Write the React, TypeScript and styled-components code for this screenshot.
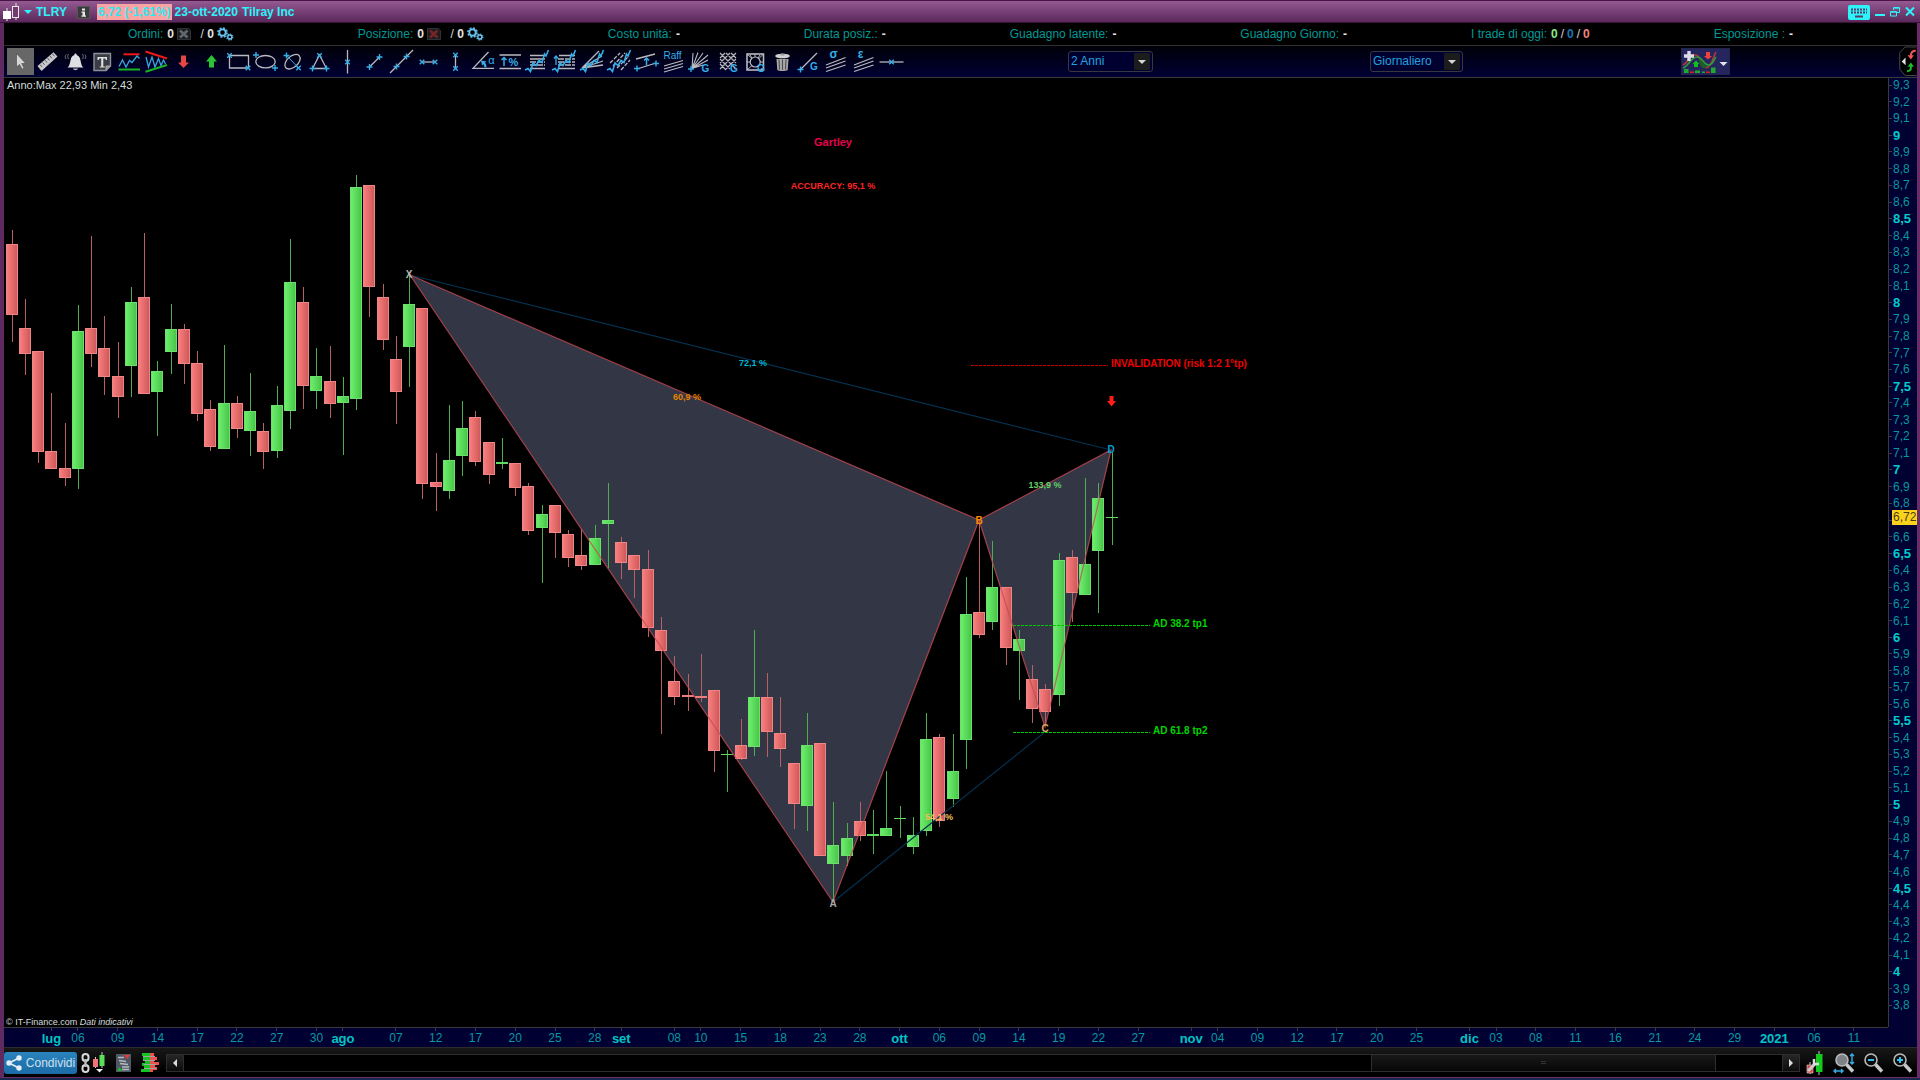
import React from "react";
import styled, { createGlobalStyle } from "styled-components";

const GlobalStyle = createGlobalStyle`
  *, *::before, *::after { box-sizing: border-box; }
  body { margin: 0; background: #000; font-family: "Liberation Sans", Arial, sans-serif; font-size: 12px; }
  button, select { font: inherit; color: inherit; }
`;

/* ---------- window frame ---------- */

const Frame = styled.div`
  display: flex;
  flex-direction: column;
  min-height: 100vh;
  background: #000;
  border-bottom: 2px solid #16284e;
`;

const Body = styled.div`
  flex: 1;
  display: flex;
  flex-direction: column;
  border-style: solid;
  border-color: #6b2b68;
  border-width: 0 3px 1px 4px;
  border-left-color: #5f2a60;
`;

const TitleBar = styled.header`
  display: flex;
  align-items: center;
  height: 23px;
  padding: 1px 5px 0 3px;
  border-top: 1px solid #4a1446;
  border-bottom: 1px solid #3c1338;
  background: linear-gradient(#945a92, #5a285a);
  color: #2df3fb;
  font-weight: bold;
`;

const Symbol = styled.h1`
  margin: 0 10px 0 1px;
  font-size: 12px;
`;

const Quote = styled.span`
  margin: 0 3px 0 7px;
  padding: 0 1px;
  line-height: 16px;
  background: #fca3a3;
  color: #30e6f0;
`;

const Company = styled.span`
  flex: 1;
  display: flex;
  gap: 4px;
`;

const WindowButtons = styled.div`
  display: flex;
  align-items: center;
  gap: 5px;
`;

const BareButton = styled.button`
  display: flex;
  align-items: center;
  justify-content: center;
  flex: none;
  padding: 0;
  border: 0;
  background: none;
  cursor: pointer;
`;

/* ---------- account summary ---------- */

const Summary = styled.dl`
  display: flex;
  justify-content: space-evenly;
  align-items: center;
  height: 23px;
  margin: 0;
  padding-bottom: 1px;
  border-bottom: 1px solid #303030;
  background: #000;
`;

const SummaryItem = styled.div`
  display: flex;
  align-items: center;
  gap: 4px;
  dt { color: #009a96; }
  dd { display: flex; align-items: center; gap: 3px; margin: 0; color: #d8d8d8; }
`;

const Count = styled.b<{ $color?: string }>`
  color: ${(p) => p.$color ?? "#e4e4e4"};
`;

/* ---------- toolbar ---------- */

const ToolBar = styled.div`
  display: grid;
  grid-template-columns: 898px 411fr 201fr 377fr 23px;
  align-items: center;
  justify-items: center;
  height: 32px;
  padding: 0 0 2px 3px;
  border-bottom: 1px solid #3a3a3a;
  background: linear-gradient(#000008, #000034);
  color: #21a2de;
`;

const Tools = styled.div`
  display: grid;
  grid-template-columns: repeat(33, 1fr);
  width: 100%;
`;

const ToolButton = styled(BareButton)<{ $active?: boolean }>`
  height: 27px;
  background: ${(p) => (p.$active ? "#676767" : "none")};
  svg { overflow: visible; }
`;

const SelectBox = styled.div<{ $width: number }>`
  position: relative;
  width: ${(p) => p.$width}px;
  height: 21px;
  svg { position: absolute; right: 3px; top: 2px; pointer-events: none; }
`;

const Select = styled.select`
  appearance: none;
  width: 100%;
  height: 100%;
  padding: 0 20px 0 2px;
  border: 1px solid #383840;
  border-radius: 3px;
  background: #000030;
`;

const IndicatorGroup = styled.div`
  display: flex;
  gap: 1px;
  border: 1px solid #23234a;
  background: #26265e;
`;

const PanelTab = styled(BareButton)`
  justify-self: end;
`;

/* ---------- chart ---------- */

const ChartGrid = styled.main`
  flex: 1;
  display: grid;
  grid-template-columns: minmax(0, 1fr) 29px;
  grid-template-rows: 1fr 20px;
  background: #000033;
`;

const Plot = styled.section`
  position: relative;
  background: #000;
  > svg { display: block; width: 100%; height: auto; }
`;

const Range = styled.p`
  position: absolute;
  left: 3px;
  top: 0;
  margin: 0;
  font-size: 11px;
  line-height: 14px;
  color: #d3dddd;
`;

const Credit = styled.p`
  position: absolute;
  left: 2px;
  bottom: 0;
  margin: 0;
  font-size: 9px;
  line-height: 10px;
  color: #d5dede;
`;

const PriceAxis = styled.ol`
  position: relative;
  display: flex;
  flex-direction: column;
  justify-content: space-between;
  margin: 0;
  padding: 0 0 14px;
  list-style: none;
  border-left: 1px solid #3a3a3a;
`;

const PriceLabel = styled.li<{ $strong: boolean }>`
  display: flex;
  align-items: center;
  gap: 1px;
  height: 14px;
  white-space: nowrap;
  color: ${(p) => (p.$strong ? "#00cccc" : "#06999e")};
  font-size: ${(p) => (p.$strong ? 13 : 12)}px;
  font-weight: ${(p) => (p.$strong ? "bold" : "normal")};
  &::before { content: ""; width: 3px; height: 1px; background: #3c3c3c; }
`;

const LastPrice = styled.li`
  position: absolute;
  left: 3px;
  width: 25px;
  line-height: 15px;
  padding-left: 1px;
  background: #fbd21c;
  color: #4a3d10;
`;

const TimeAxis = styled.ol`
  display: grid;
  grid-template-columns: repeat(142, minmax(0, 1fr));
  margin: 0;
  padding: 0 1px;
  list-style: none;
  border-top: 1px solid #3a3a3a;
`;

const TimeLabel = styled.li<{ $bar: number; $strong: boolean }>`
  grid-row: 1;
  grid-column: ${(p) => p.$bar + 1};
  display: flex;
  flex-direction: column;
  align-items: center;
  white-space: nowrap;
  line-height: 15px;
  color: ${(p) => (p.$strong ? "#00c4c4" : "#06999e")};
  font-size: ${(p) => (p.$strong ? 13 : 12)}px;
  font-weight: ${(p) => (p.$strong ? "bold" : "normal")};
  &::before { content: ""; width: 1px; height: 3px; background: #3c3c3c; }
`;

/* ---------- bottom bar ---------- */

const BottomBar = styled.footer`
  display: flex;
  align-items: center;
  height: 30px;
  padding-right: 4px;
  border-top: 1px solid #2c2c2c;
  background: linear-gradient(#181818, #000 80%);
`;

const ShareButton = styled(BareButton)`
  gap: 4px;
  width: 73px;
  height: 22px;
  border-radius: 3px;
  background: linear-gradient(#2a83bd, #1b6ba6);
  color: #cfe0ee;
`;

const LeftIcons = styled.div`
  display: flex;
  align-items: center;
  gap: 10px;
  padding: 0 7px 0 4px;
`;

const Scroll = styled.div`
  flex: 1;
  display: flex;
  height: 18px;
`;

const ScrollButton = styled(BareButton)`
  width: 18px;
  border: 1px solid #2e2e2e;
  background: linear-gradient(#262626, #0c0c0c);
`;

const Track = styled.div`
  flex: 1;
  display: grid;
  grid-template-columns: 1188fr 346fr 66fr;
  border: solid #2e2e2e;
  border-width: 1px 0;
  background: #000;
`;

const Thumb = styled.div`
  grid-column: 2;
  display: flex;
  align-items: center;
  justify-content: center;
  border: solid #2e2e2e;
  border-width: 0 1px;
  background: linear-gradient(#181818, #070707);
  &::before { content: ""; width: 5px; height: 3px; border: solid #333; border-width: 1px 0; }
`;

const ZoomIcons = styled.div`
  display: flex;
  gap: 7px;
  margin-left: 4px;
`;

/* ---------- toolbar drawings ---------- */

const W = "#b9b9bd";
const B = "#35aee6";

const Cross = ({ x, y, plus }: { x: number; y: number; plus?: boolean }) => (
  <path
    d={plus ? `M${x - 3} ${y}h6M${x} ${y - 3}v6` : `M${x - 2.3} ${y - 2.3}l4.6 4.6M${x - 2.3} ${y + 2.3}l4.6 -4.6`}
    stroke={B}
    strokeWidth="1.4"
  />
);

const L = ({ d, c = W, w = 1.3, dash }: { d: string; c?: string; w?: number; dash?: string }) => (
  <path d={d} stroke={c} strokeWidth={w} strokeDasharray={dash} />
);

const T = ({ x, y, s, children, bold = true }: { x: number; y: number; s: number; children: string; bold?: boolean }) => (
  <text x={x} y={y} fontSize={s} fontWeight={bold ? "bold" : "normal"} fill={B} textAnchor="middle">{children}</text>
);

const zigzag = "M1 22L4 20.5L6.5 23.5L9 15L12 17.5L15 12.5L18 14.5L20.5 6L22 8L24.5 2";

const tools: [string, React.ReactNode][] = [
  ["Puntatore", <path d="M9.5 5.5V19l3-2.6 2.6 4.8 2-1-2.4-4.7h4z" fill="#d6d6d6" stroke="#444" strokeWidth=".6" />],
  ["Misura", <><path d="M3.5 18L19.5 4.2 23.5 8.6 7.5 23z" fill="#c9c9cd" /><L d="M6 16.5l2 2.4M8.5 14.4l2 2.4M11 12.2l2 2.4M13.5 10l2 2.4M16 8l2 2.4M18.4 5.8l2 2.4" c="#55565c" w={1} /></>],
  ["Allarme", <><path d="M5.5 19.5C8 18 8 13.5 9 10.500 9.500 8.500 11 7.500 12.200 7.300 12.200 5 14.800 5 14.800 7.300 16 7.500 17.500 8.500 18 10.500 19 13.500 19 18 21.500 19.500z" fill="#dfe0e3" /><path d="M11 20.500h5c-.5 2.200-4.500 2.200-5 0z" fill="#b5b5b9" /><L d="M4 6.500c-1 1.500-1 3 0 4.500M6.500 6c-1 1.500-1 3.500 0 5M23 6.500c1 1.500 1 3 0 4.500M20.500 6c1 1.500 1 3.500 0 5" w={0.8} c="#8b8b90" /></>],
  ["Testo", <><path d="M5 5.5h16.500V18L17 22.500H5z" fill="#3a3d45" stroke="#8e9097" strokeWidth="1.4" /><path d="M21.500 18H17v4.500" fill="#999" stroke="#aaa" /><path d="M8.500 9h9.500v3h-1.200l-.5-1.500h-2v8h1.500v1H10.700v-1h1.500v-8h-2l-.5 1.500H8.500z" fill="#e0e0e0" /></>],
  ["Trend orizzontale", <><L d="M7.500 6.300H23.500" c="#f01818" w={2} /><L d="M2.500 21.500H24" c="#16b524" w={2} /><L d="M3 18.500L6.500 12l3.500 7 3.500-6.500 2.500 2L21 8l2.500 2.500" c="#39a5e0" /></>],
  ["Triangolo trend", <><L d="M2.500 3.500L24 10.500" c="#f01818" w={2} /><L d="M2.500 23.700L24 17" c="#16b524" w={2} /><L d="M3 9l2.500 10L9 9l3 10 3.500-8.500 2.500 7 2.500-5.500 2 4" c="#39a5e0" /></>],
  ["Freccia giù", <path d="M11 7.500h5v7h3L13.500 20 8 14.500h3z" fill="#e84545" />],
  ["Freccia su", <path d="M11 19.500h5v-6h3L13.500 7 8 13.500h3z" fill="#2cc434" />],
  ["Rettangolo", <><L d="M4.500 7.500H23.500V20H4.500z" /><Cross x={4.5} y={7.5} /><Cross x={23} y={20} /></>],
  ["Ellisse", <><ellipse cx="13.5" cy="13.7" rx="9.7" ry="6.2" stroke={W} strokeWidth="1.3" /><Cross x={4} y={7} plus /><Cross x={23} y={20} plus /></>],
  ["Ellisse obliqua", <><ellipse cx="13.5" cy="13.7" rx="9" ry="5.5" transform="rotate(-42 13.5 13.7)" stroke={W} strokeWidth="1.3" /><L d="M7.500 7.300L19.500 20" c={B} w={1} /><Cross x={7.5} y={7.5} plus /><Cross x={19.5} y={20} /></>],
  ["Triangolo", <><L d="M13.500 7L20.500 20.500H6.500z" /><Cross x={13.5} y={7.5} /><Cross x={6.5} y={20.5} plus /><Cross x={20.5} y={20.5} plus /></>],
  ["Verticale", <><L d="M13.500 2V25.500" /><Cross x={13.5} y={14} /></>],
  ["Segmento", <><L d="M8.500 19L18.500 9" /><Cross x={8.5} y={19} plus /><Cross x={18.5} y={9} plus /></>],
  ["Retta", <><L d="M2 25L25 2" /><Cross x={8.5} y={18.5} plus /><Cross x={18.5} y={8.5} plus /></>],
  ["Segmento orizzontale", <><L d="M7 14H20" /><Cross x={7} y={14} /><Cross x={20} y={14} /></>],
  ["Segmento verticale", <><L d="M13.500 7V20" /><Cross x={13.5} y={7} /><Cross x={13.5} y={20.5} /></>],
  ["Angolo", <><L d="M18.500 4L3 20.300H24" /><path d="M11 12.500l5.500 1-1.500 1.300c1 1.300 1.500 2.700 1.500 4.500h-2.200c0-1.200-.3-2.200-1-3l-1.300 1.200z" fill={B} /><T x={21.5} y={16} s={11} bold={false}>α</T></>],
  ["Variazione percentuale", <><L d="M2.500 7H24M2.500 20.500H24" /><L d="M7 18V9.500M4.500 12L7 9.500l2.500 2.500" c={B} w={1.5} /><T x={16.5} y={18} s={11}>%</T></>],
  ["Ritracciamenti", <><L d="M6 7.500H21M6 20.500H21M6 11H21" /><L d="M6 14H21M6 17H21" dash="6 1" /><L d={zigzag} c={B} w={1.6} /></>],
  ["Estensioni", <><L d="M8 7.500H24M8 20.500H24" /><L d="M7 11H24M7 14H24M7 17H24" dash="6 1" /><L d={zigzag} c={B} w={1.6} /><L d="M5 17V8M3 10.500L5 8l2 2.500" c={B} /></>],
  ["Ventaglio", <><L d="M3 20L20 3M3 20L23 8M3 20L24 13M3 20L24 17" /><L d={zigzag} c={B} w={1.6} /></>],
  ["Canali", <><L d="M4 15L14 5M7 18L19 5M11 20L23 8M15 22L24 12" dash="4 1.5" /><L d={zigzag} c={B} w={1.6} /></>],
  ["Canale parallelo", <><L d="M3 11L22 6M4 21L23 15" /><L d="M13.500 17.500V10M11 12.500l2.500-2.500 2.500 2.500" c={B} w={1.5} /><Cross x={4} y={20.5} plus /><Cross x={23} y={15.5} plus /></>],
  ["Raff", <><T x={12.5} y={11} s={10} bold={false}>Raff</T><L d="M4 18L23 12.500M4 21L23 15.500M4 24L23 18.500" /></>],
  ["Ventaglio di Gann", <><L d="M5 20.500L6 5M5 20.500L11 4.500M5 20.500L16 5M5 20.500L21 7M5 20.500L21 12M5 20.500L16 17" w={1.1} /><Cross x={4} y={21} plus /><T x={18.5} y={24} s={10}>G</T></>],
  ["Griglia di Gann", <><L d="M5 5L21 21M11 5L21 15M5 11L15 21M16 5l5 5M5 16l6 6M21 5L5 21M15 5L5 15M21 11L11 21M10 5L5 10" w={1.2} /><T x={19} y={24} s={10}>G</T></>],
  ["Quadrato di Gann", <><rect x="5" y="6" width="16.5" height="16" stroke={W} strokeWidth="1.6" /><circle cx="13.2" cy="14" r="5" stroke={W} strokeWidth="1.2" /><L d="M5 6l5 4.500M21.500 6L17 10.500M5 22l5-4.500M13 6v3M5 14h3M21 14h-3M8 7l2 3M18 7l-2 3" w={1} /><T x={19} y={24} s={10}>G</T></>],
  ["Elimina", <><ellipse cx="13.5" cy="8" rx="7.3" ry="2.3" fill="#d0d0d0" /><path d="M11.500 5.500h4v2h-4z" fill="#9c9c9c" /><path d="M7.500 11h12l-.8 11c-2 1.300-8.500 1.300-10.400 0z" fill="#a8a8a8" /><L d="M10 11.500l.5 10M13.500 11.500v10.500M17 11.500l-.5 10" c="#4c4c4c" w={1.1} /></>],
  ["Linea di Gann", <><L d="M4 22L21 5" /><Cross x={4.5} y={21.5} plus /><T x={18} y={21.5} s={10}>G</T></>],
  ["Deviazione standard", <><L d="M3 17L22.500 9.500M3 20L22.500 13M3 23.500L22.500 17" /><T x={10.5} y={10} s={12}>σ</T></>],
  ["Errore standard", <><L d="M3 17L22.500 9.500M3 20L22.500 13M3 23.500L22.500 17" /><T x={9.5} y={10} s={12}>ε</T></>],
  ["Orizzontale", <><L d="M1.500 14H25.500" /><Cross x={13.5} y={14} /></>],
];

const Gears = () => (
  <svg width="17" height="14" viewBox="0 0 17 14" fill="none">
    <circle cx="5.5" cy="5.5" r="4.5" stroke="#56b4e4" strokeWidth="1.8" strokeDasharray="2 1.53" />
    <circle cx="5.5" cy="5.5" r="3.2" stroke="#6cc2ee" strokeWidth="1.8" />
    <circle cx="12.8" cy="10" r="3" stroke="#56b4e4" strokeWidth="1.3" strokeDasharray="1.3 1.06" />
    <circle cx="12.8" cy="10" r="2" stroke="#6cc2ee" strokeWidth="1.3" />
  </svg>
);

const CancelBox = ({ color }: { color: string }) => (
  <svg width="14" height="12" viewBox="0 0 14 12" fill="none">
    <path d="M.5 .5h11l2 2v9H.5z" fill="#1b1c20" stroke="#303238" />
    <path d="M3 2.500l7.500 7M10.500 2.500L3 9.500" stroke={color} strokeWidth="2.8" />
  </svg>
);

const SelectArrow = () => (
  <svg width="16" height="17" viewBox="0 0 16 17">
    <rect width="16" height="17" rx="1" fill="#1c1c1c" />
    <path d="M4 7h8l-4 4z" fill="#d6d6d6" />
  </svg>
);

/* ---------- market data ---------- */

// One bar per session: direction, high, body top, body bottom, low (plot units).
type Bar = [1 | 0, number, number, number, number];
const bars: Bar[] = [
  [0, 230, 244, 315, 342], [0, 299, 328, 354, 375], [0, 351, 351, 452, 463], [0, 393, 451, 469, 469],
  [0, 423, 468, 478, 486], [1, 305, 331, 469, 489], [0, 236, 328, 354, 367], [0, 316, 348, 377, 395],
  [0, 342, 376, 397, 418], [1, 287, 302, 366, 397], [0, 233, 297, 394, 394], [1, 361, 371, 392, 436],
  [1, 304, 329, 352, 374], [0, 324, 329, 364, 384], [0, 351, 363, 414, 421], [0, 400, 409, 447, 451],
  [1, 345, 403, 449, 449], [0, 396, 403, 429, 438], [1, 373, 411, 431, 456], [0, 423, 431, 452, 469],
  [1, 386, 405, 451, 458], [1, 239, 282, 411, 429], [0, 287, 302, 386, 409], [1, 348, 376, 391, 409],
  [0, 346, 381, 404, 418], [1, 377, 396, 403, 455], [1, 175, 187, 399, 410], [0, 185, 185, 287, 317],
  [0, 284, 297, 340, 350], [0, 336, 359, 392, 424], [1, 275, 304, 347, 387], [0, 308, 308, 484, 499],
  [0, 453, 482, 487, 511], [1, 405, 460, 491, 499], [1, 401, 428, 456, 476], [0, 411, 417, 462, 466],
  [0, 442, 442, 475, 484], [1, 438, 462, 464, 469], [0, 463, 463, 488, 496], [0, 483, 486, 531, 535],
  [1, 505, 514, 528, 583], [0, 505, 505, 533, 558], [0, 530, 534, 558, 567], [0, 529, 555, 566, 570],
  [1, 525, 538, 565, 565], [1, 483, 520, 524, 568], [0, 537, 542, 563, 579], [0, 555, 555, 570, 598],
  [0, 550, 569, 628, 637], [0, 617, 630, 651, 734], [0, 656, 681, 697, 705], [0, 674, 695, 697, 711],
  [0, 654, 696, 698, 702], [0, 690, 690, 751, 772], [1, 750, 754, 755, 792], [0, 719, 745, 759, 760],
  [1, 630, 697, 747, 756], [0, 673, 697, 732, 757], [0, 697, 733, 749, 767], [0, 763, 763, 804, 829],
  [1, 713, 745, 806, 831], [0, 743, 743, 856, 856], [1, 802, 845, 864, 902], [1, 823, 838, 856, 866],
  [0, 802, 821, 836, 841], [1, 810, 834, 836, 854], [1, 771, 828, 836, 836], [1, 806, 818, 819, 838],
  [1, 817, 835, 847, 854], [1, 713, 739, 831, 836], [0, 734, 737, 821, 827], [1, 734, 771, 799, 807],
  [1, 577, 614, 740, 769], [0, 520, 612, 635, 638], [1, 541, 587, 622, 630], [0, 587, 587, 648, 665],
  [1, 630, 639, 651, 700], [0, 665, 679, 709, 723], [0, 684, 689, 712, 726], [1, 553, 560, 695, 706],
  [0, 550, 557, 593, 622], [1, 478, 564, 595, 595], [1, 483, 498, 551, 613], [1, 451, 517, 518, 545],
];

const sessions: [number, string][] = [
  [3, "lug"], [5, "06"], [8, "09"], [11, "14"], [14, "17"], [17, "22"], [20, "27"], [23, "30"], [25, "ago"],
  [29, "07"], [32, "12"], [35, "17"], [38, "20"], [41, "25"], [44, "28"], [46, "set"], [50, "08"], [52, "10"],
  [55, "15"], [58, "18"], [61, "23"], [64, "28"], [67, "ott"], [70, "06"], [73, "09"], [76, "14"], [79, "19"],
  [82, "22"], [85, "27"], [89, "nov"], [91, "04"], [94, "09"], [97, "12"], [100, "17"], [103, "20"], [106, "25"],
  [110, "dic"], [112, "03"], [115, "08"], [118, "11"], [121, "16"], [124, "21"], [127, "24"], [130, "29"],
  [133, "2021"], [136, "06"], [139, "11"],
];
const isMonth = (s: string) => s.length > 2;

const lastPrice = 6.72;
const prices = Array.from({ length: 56 }, (_, i) => 93 - i);
const priceText = (tenths: number) =>
  tenths % 10 === 0 ? String(tenths / 10) : (tenths / 10).toFixed(1).replace(".", ",");

const barX = (i: number) => Math.round(11.6 + 13.253 * i);

const Candles = () => (
  <g shapeRendering="crispEdges">
    {bars.map(([up, high, top, bottom, low], i) => {
      const x = barX(i);
      const line = up ? "#4fae4f" : "#b96064";
      return (
        <g key={i}>
          <rect x={x - 0.5} y={high} width="1" height={low - high} fill={line} />
          {bottom - top < 4 ? (
            <rect x={x - 6} y={top} width="12" height={bottom - top} fill={up ? "#5fdc5f" : "#ee7c7c"} />
          ) : (
            <rect x={x - 5.5} y={top + 0.5} width="11" height={bottom - top - 1}
              fill={up ? "url(#up)" : "url(#down)"} stroke={up ? "#6ce06c" : "#ef8585"} />
          )}
        </g>
      );
    })}
  </g>
);

const Chart = () => (
  <svg viewBox="4 78 1884 948" fill="none" role="img" aria-label="Grafico TLRY con pattern Gartley" fontWeight="bold">
    <defs>
      <linearGradient id="up"><stop stopColor="#6df06d" /><stop offset="1" stopColor="#48c448" /></linearGradient>
      <linearGradient id="down"><stop stopColor="#fb7f7f" /><stop offset="1" stopColor="#cd5858" /></linearGradient>
    </defs>
    <path d="M410 275L833 902L979 520ZM979 520L1045 727L1111 450Z" fill="#323645" />
    <Candles />
    <path d="M410 275L1111 450M833 902L1045 732" stroke="#04304f" strokeWidth="1.2" />
    <path d="M410 275L833 902L979 520ZM979 520L1045 727L1111 450Z" stroke="#c84a55" strokeOpacity=".8" strokeWidth="1.2" />
    <g strokeDasharray="3 1" shapeRendering="crispEdges">
      <path d="M971 365.500H1108" stroke="#c80000" />
      <path d="M1013 625.500H1150M1013 732.500H1150" stroke="#00c800" />
    </g>
    <path d="M1109.500 396h4v5h2.500l-4.500 5.500-4.500-5.500h2.500z" fill="#ff1c1c" />
    <g fontSize="10">
      <text x="1111" y="367" fill="#f00000">INVALIDATION (risk 1:2 1°tp)</text>
      <text x="1153" y="627" fill="#00d400">AD 38.2 tp1</text>
      <text x="1153" y="734" fill="#00d400">AD 61.8 tp2</text>
    </g>
    <g textAnchor="middle">
      <text x="833" y="146" fontSize="11" fill="#e6004c">Gartley</text>
      <g fontSize="9">
        <text x="833" y="189" fill="#ff2424">ACCURACY: 95,1 %</text>
        <text x="753" y="366" fill="#00b4d4">72,1 %</text>
        <text x="687" y="400" fill="#e68200">60,9 %</text>
        <text x="1045" y="488" fill="#64d068">133,9 %</text>
        <text x="939" y="820" fill="#f0c058">54,1 %</text>
      </g>
      <g fontSize="10">
        <text x="409" y="278" fill="#b8b8b8">X</text>
        <text x="833" y="907" fill="#a8a8a8">A</text>
        <text x="979" y="524" fill="#ff8c00">B</text>
        <text x="1045" y="732" fill="#e0a860">C</text>
        <text x="1111" y="453" fill="#00a0d8">D</text>
      </g>
    </g>
  </svg>
);

const Magnifier = ({ children, fill = "none" }: { children?: React.ReactNode; fill?: string }) => (
  <svg width="22" height="22" viewBox="0 0 22 22" fill="none">
    <circle cx="9" cy="8" r="6" fill={fill} stroke="#b9b9b9" strokeWidth="1.6" />
    <path d="M13.500 12.500L20 19.500" stroke="#c8c8c8" strokeWidth="3.4" />
    {children}
  </svg>
);

export default function App() {
  return (
    <>
      <GlobalStyle />
      <Frame>
        <TitleBar>
          <svg width="18" height="18" viewBox="0 0 18 18" fill="none">
            <path d="M4 5v13M13 0v17" stroke="#e8e8e8" />
            <rect x="0" y="8" width="8" height="8" fill="#fff" />
            <rect x="9.5" y="3.5" width="6" height="11" fill="#6f3d6e" stroke="#e8e8e8" />
          </svg>
          <BareButton aria-label="Menu titolo">
            <svg width="14" height="8" viewBox="0 0 14 8"><path d="M3 2h8l-4 4z" fill="#2df3fb" /></svg>
          </BareButton>
          <Symbol>TLRY</Symbol>
          <BareButton aria-label="Informazioni">
            <svg width="13" height="13" viewBox="0 0 13 13">
              <rect x=".5" y=".5" width="12" height="12" fill="#3a3a3e" stroke="#555" />
              <path d="M5 2.500h3v2H5zM4.500 5.500H8v4h1v1.300H4.500V9.500h1V6.800h-1z" fill="#e8e8e8" />
            </svg>
          </BareButton>
          <Quote>6,72 (-1,61%)</Quote>
          <Company><span>23-ott-2020</span><span>Tilray Inc</span></Company>
          <WindowButtons>
            <BareButton aria-label="Tastiera">
              <svg width="22" height="15" viewBox="0 0 22 15">
                <rect width="22" height="15" rx="2" fill="#2df3fb" />
                <path d="M3 4.500h16M3 7.500h16" stroke="#5b3a66" strokeWidth="2" strokeDasharray="2 1" />
                <path d="M7 11.500h8" stroke="#5b3a66" strokeWidth="2" />
              </svg>
            </BareButton>
            <BareButton aria-label="Riduci">
              <svg width="10" height="12" viewBox="0 0 10 12"><path d="M0 9h10" stroke="#2df3fb" strokeWidth="2" /></svg>
            </BareButton>
            <BareButton aria-label="Ripristina">
              <svg width="10" height="12" viewBox="0 0 10 12" fill="none" stroke="#2df3fb">
                <path d="M3.500 4V1.500h6v5H7" /><path d="M3.500 2.200h6M.5 5.500h6v4.500h-6zM.5 6.200h6" />
              </svg>
            </BareButton>
            <BareButton aria-label="Chiudi">
              <svg width="10" height="12" viewBox="0 0 10 12"><path d="M1 1.500l8 8M9 1.500l-8 8" stroke="#2df3fb" strokeWidth="2" /></svg>
            </BareButton>
          </WindowButtons>
        </TitleBar>

        <Body>
          <Summary>
            <SummaryItem>
              <dt>Ordini:</dt>
              <dd>
                <Count>0</Count>
                <BareButton aria-label="Annulla ordini"><CancelBox color="#62666e" /></BareButton>
                <span>&nbsp; / <Count>0</Count></span>
                <BareButton aria-label="Impostazioni ordini"><Gears /></BareButton>
              </dd>
            </SummaryItem>
            <SummaryItem>
              <dt>Posizione:</dt>
              <dd>
                <Count>0</Count>
                <BareButton aria-label="Chiudi posizione"><CancelBox color="#742424" /></BareButton>
                <span>&nbsp; / <Count>0</Count></span>
                <BareButton aria-label="Impostazioni posizione"><Gears /></BareButton>
              </dd>
            </SummaryItem>
            {["Costo unità:", "Durata posiz.:", "Guadagno latente:", "Guadagno Giorno:"].map((t) => (
              <SummaryItem key={t}><dt>{t}</dt><dd><Count>-</Count></dd></SummaryItem>
            ))}
            <SummaryItem>
              <dt>I trade di oggi:</dt>
              <dd>
                <Count $color="#8be88b">0</Count>/<Count $color="#1478b4">0</Count>/<Count $color="#f08484">0</Count>
              </dd>
            </SummaryItem>
            <SummaryItem><dt>Esposizione :</dt><dd><Count>-</Count></dd></SummaryItem>
          </Summary>

          <ToolBar>
            <Tools role="toolbar" aria-label="Strumenti di disegno">
              {tools.map(([name, drawing], i) => (
                <ToolButton key={name} aria-label={name} $active={i === 0}>
                  <svg width="27" height="27" viewBox="0 0 27 27" fill="none">{drawing}</svg>
                </ToolButton>
              ))}
            </Tools>
            <SelectBox $width={85}>
              <Select aria-label="Periodo"><option>2 Anni</option></Select>
              <SelectArrow />
            </SelectBox>
            <SelectBox $width={93}>
              <Select aria-label="Intervallo"><option>Giornaliero</option></Select>
              <SelectArrow />
            </SelectBox>
            <IndicatorGroup>
              <BareButton aria-label="Aggiungi indicatore">
                <svg width="35" height="25" viewBox="0 0 35 25" fill="none">
                  <path d="M1 16C6 14 8 5 14 6S21 22 26 18 31 8 34 3" stroke="#b03838" strokeWidth="1.6" />
                  <path d="M1 19C6 18 9 8 15 8s7 9 12 8 4-5 7-8" stroke="#2e9e3a" strokeWidth="1.6" />
                  <path d="M16 9c4 1 5 6 9 8-3 4-6 2-7-2z" fill="#1e5c28" />
                  <path d="M7 2v10M2 7h10" stroke="#dcdce8" strokeWidth="3.4" />
                  <path d="M24 3h4v4h2l-4 3.500L22 7h2z" fill="#f04040" />
                  <path d="M12 18h4v-3h1.500L14 11.500 10.500 15H12z" fill="#12c01c" />
                  <path d="M2 20h4.500v4H2zM13 21.500h5v2.500h-5zM29 18.500h4.500V24H29zM20 22.500h3V24h-3z" fill="#20a82c" />
                  <path d="M8 22.500h4V24H8zM24 22.500h4V24h-4z" fill="#d02020" />
                </svg>
              </BareButton>
              <BareButton aria-label="Menu indicatori">
                <svg width="11" height="25" viewBox="0 0 11 25"><path d="M1.500 13h8l-4 4z" fill="#e4e4ee" /></svg>
              </BareButton>
            </IndicatorGroup>
            <PanelTab aria-label="Apri pannello ordini">
              <svg width="18" height="30" viewBox="0 0 18 31" fill="none">
                <path d="M18 1H6L.5 7v17L6 30.500h12" fill="#000" stroke="#4a4a4a" />
                <path d="M2.500 16l4-4v8z" fill="#e0e0e0" />
                <path d="M17 5c-4 0-5 2-5 5" stroke="#f05858" strokeWidth="2" /><path d="M8.500 9.500h6.500L12 14z" fill="#f05858" />
                <path d="M8 26c4 0 4-2 4-5" stroke="#20c02c" strokeWidth="2" /><path d="M8.500 21.500h6.500L12 17z" fill="#20c02c" />
              </svg>
            </PanelTab>
          </ToolBar>

          <ChartGrid>
            <Plot>
              <Chart />
              <Range>Anno:Max 22,93 Min 2,43</Range>
              <Credit>© IT-Finance.com <i>Dati indicativi</i></Credit>
            </Plot>
            <PriceAxis>
              {prices.map((p) => (
                <PriceLabel key={p} $strong={p % 5 === 0}>
                  {p !== Math.round(lastPrice * 10) && priceText(p)}
                </PriceLabel>
              ))}
              <LastPrice style={{ top: `${((9.3 - lastPrice) / 5.5) * 97}%` }}>6,72</LastPrice>
            </PriceAxis>
            <TimeAxis>
              {sessions.map(([bar, label]) => (
                <TimeLabel key={bar} $bar={bar} $strong={isMonth(label)}>{label}</TimeLabel>
              ))}
            </TimeAxis>
          </ChartGrid>

          <BottomBar>
            <ShareButton>
              <svg width="16" height="16" viewBox="0 0 16 16" fill="#e6eef5">
                <path d="M13 3L3 8l10 5" fill="none" stroke="#e6eef5" strokeWidth="1.6" />
                <circle cx="13" cy="3" r="2.7" /><circle cx="3" cy="8" r="2.7" /><circle cx="13" cy="13" r="2.7" />
              </svg>
              Condividi
            </ShareButton>
            <LeftIcons>
              <BareButton aria-label="Collega grafici">
                <svg width="25" height="22" viewBox="0 0 25 22" fill="none">
                  <rect x="1.5" y="2" width="6" height="7" rx="3" stroke="#d8d8d8" strokeWidth="2" />
                  <rect x="1.5" y="13" width="6" height="7" rx="3" stroke="#d8d8d8" strokeWidth="2" />
                  <path d="M4.500 7v8" stroke="#bdbdbd" strokeWidth="2.4" />
                  <path d="M14.500 5v11M21 0v16" stroke="#ccc" />
                  <path d="M12 7h5v8h-5z" fill="#f07474" /><path d="M18.500 3h5v11h-5z" fill="#58e058" />
                  <path d="M15 17h7l-3.500 3.500z" fill="#eee" />
                </svg>
              </BareButton>
              <BareButton aria-label="Lista ordini">
                <svg width="15" height="18" viewBox="0 0 15 18">
                  <path d="M0 0h15v18H0z" fill="#4f5863" />
                  <path d="M2 3.500h6M3 6.500l7 1M4 9.500l8 1M6 13h7M6 15.500h7" stroke="#b4bac2" strokeWidth="1.4" />
                  <path d="M8 1h6l-3 4z" fill="#e83838" /><path d="M1 17h5l-2.500-4z" fill="#20b82c" />
                </svg>
              </BareButton>
              <BareButton aria-label="Book">
                <svg width="18" height="19" viewBox="0 0 18 19">
                  <path d="M1 0h8v19H0v-3h3v-3H1v-3h3V7H2V4h2V3H1z" fill="#16c424" />
                  <path d="M9 0h4v4h3v3h-3v2h5v3h-4v2h2v3h-4v2H9z" fill="#f05050" />
                  <path d="M2 3.500h12M2 7.500h12M3 11.500h12M3 15.500h12" stroke="#9aa89a" />
                </svg>
              </BareButton>
            </LeftIcons>
            <Scroll>
              <ScrollButton aria-label="Scorri indietro">
                <svg width="6" height="8" viewBox="0 0 6 8"><path d="M5 0v8L1 4z" fill="#ddd" /></svg>
              </ScrollButton>
              <Track><Thumb /></Track>
              <ScrollButton aria-label="Scorri avanti">
                <svg width="6" height="8" viewBox="0 0 6 8"><path d="M1 0v8l4-4z" fill="#ddd" /></svg>
              </ScrollButton>
            </Scroll>
            <ZoomIcons>
              <BareButton aria-label="Impostazioni grafico">
                <svg width="22" height="24" viewBox="0 0 22 24" fill="none">
                  <path d="M6 11v12M15 0v24" stroke="#c8c8c8" />
                  <path d="M3 14h6v8H3z" fill="#e04848" stroke="#ddd" strokeWidth=".6" />
                  <path d="M12 3h6.500v18H12z" fill="#12cc1c" />
                  <path d="M4 20l7-7" stroke="#ccc" strokeWidth="3" /><path d="M10 8v5h5" stroke="#ddd" strokeWidth="2.5" />
                </svg>
              </BareButton>
              <BareButton aria-label="Adatta zoom">
                <Magnifier fill="#7d8288">
                  <path d="M19 2v10M17 4l2-2 2 2M17 10l2 2 2-2M1 19h9M3 17l-2 2 2 2M8 17l2 2-2 2" stroke="#35aee6" strokeWidth="1.4" />
                </Magnifier>
              </BareButton>
              <BareButton aria-label="Riduci zoom">
                <Magnifier><path d="M6 8h6" stroke="#35c0f0" strokeWidth="2" /></Magnifier>
              </BareButton>
              <BareButton aria-label="Aumenta zoom">
                <Magnifier><path d="M6 8h6M9 5v6" stroke="#35c0f0" strokeWidth="2" /></Magnifier>
              </BareButton>
            </ZoomIcons>
          </BottomBar>
        </Body>
      </Frame>
    </>
  );
}
